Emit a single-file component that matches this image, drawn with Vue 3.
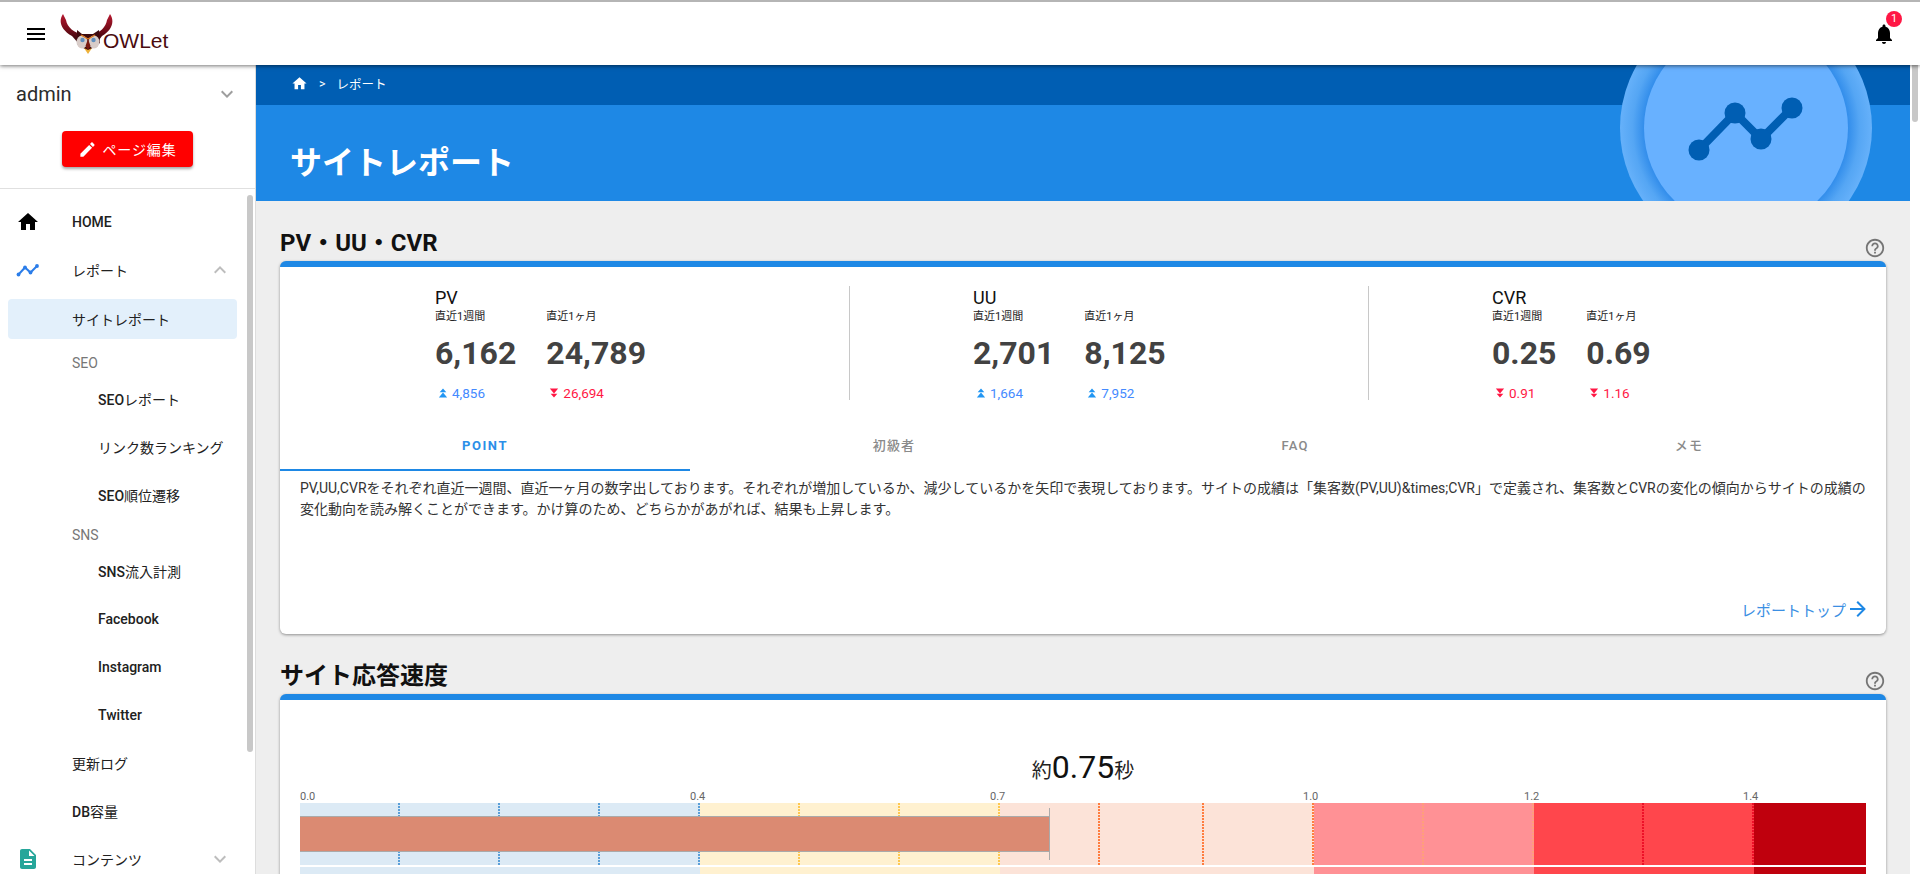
<script setup>
const sideItems = [
  { label: 'HOME', icon: 'home' },
  { label: 'レポート', icon: 'chart', chevron: 'up' },
  { label: 'サイトレポート', active: true },
  { label: 'SEO', group: true },
  { label: 'SEOレポート', nested: true },
  { label: 'リンク数ランキング', nested: true },
  { label: 'SEO順位遷移', nested: true },
  { label: 'SNS', group: true },
  { label: 'SNS流入計測', nested: true },
  { label: 'Facebook', nested: true },
  { label: 'Instagram', nested: true },
  { label: 'Twitter', nested: true },
  { label: '更新ログ' },
  { label: 'DB容量' },
  { label: 'コンテンツ', icon: 'doc', chevron: 'down' },
]

// 英字だけ medium、和文は regular で出す
function labelParts(text) {
  return text.split(/([A-Za-z]+)/).filter(Boolean)
}

const stats = [
  { name: 'PV', cols: [
    { label: '直近1週間', value: '6,162', delta: '4,856', up: true },
    { label: '直近1ヶ月', value: '24,789', delta: '26,694', up: false },
  ] },
  { name: 'UU', cols: [
    { label: '直近1週間', value: '2,701', delta: '1,664', up: true },
    { label: '直近1ヶ月', value: '8,125', delta: '7,952', up: true },
  ] },
  { name: 'CVR', cols: [
    { label: '直近1週間', value: '0.25', delta: '0.91', up: false },
    { label: '直近1ヶ月', value: '0.69', delta: '1.16', up: false },
  ] },
]

const tabs = ['POINT', '初級者', 'FAQ', 'メモ']

// 応答速度メーターの区間 (目盛りごとのpx幅)
const segments = [
  { cls: 'seg-blue', cells: [100, 100, 100, 100] },
  { cls: 'seg-yellow', cells: [100, 100, 100] },
  { cls: 'seg-peach', cells: [100, 104, 110] },
  { cls: 'seg-pink', cells: [110, 110] },
  { cls: 'seg-red', cells: [110, 110] },
  { cls: 'seg-dark', cells: [112], last: true },
]

const scale = [
  { text: '0.0', width: 390 },
  { text: '0.4', width: 300 },
  { text: '0.7', width: 313 },
  { text: '1.0', width: 221 },
  { text: '1.2', width: 219 },
  { text: '1.4', width: 100 },
]

function segWidth(seg) {
  return seg.cells.reduce((a, b) => a + b, 0)
}
</script>

<template>
  <div class="app">
    <header class="topbar">
      <svg class="menu-icon" viewBox="0 0 24 24"><path d="M3 18h18v-2H3v2zm0-5h18v-2H3v2zm0-7v2h18V6H3z" /></svg>
      <div class="logo">
        <svg class="owl" viewBox="0 0 54 42">
          <defs>
            <linearGradient id="wing" x1="0" y1="0" x2="0" y2="1">
              <stop offset="0" stop-color="#b81830" />
              <stop offset="0.55" stop-color="#6e0c18" />
              <stop offset="1" stop-color="#240406" />
            </linearGradient>
          </defs>
          <path d="M3 1C-2 8 1 17 12 23L19 31L24 22C14 20 7 14 6 7Z" fill="url(#wing)" />
          <path d="M50 1C55 8 52 17 42 23L36 31L31 22C40 20 46 14 47 7Z" fill="url(#wing)" />
          <path d="M17 17L22 21H33L39 17L40 30L28 38L17 31Z" fill="#3e0a0e" />
          <ellipse cx="22" cy="29" rx="5.5" ry="6.5" fill="#d8ccc8" />
          <ellipse cx="34" cy="29" rx="5.5" ry="6.5" fill="#d8ccc8" />
          <circle cx="22.5" cy="27" r="2.2" fill="#5f8fbe" />
          <circle cx="33.5" cy="27" r="2.2" fill="#5f8fbe" />
          <path d="M21 22L28 26L35 22" fill="none" stroke="#d9761e" stroke-width="1.4" />
          <path d="M28 26L30.5 33L28 37L25.5 33Z" fill="#7a1a10" />
          <path d="M24 35L28 41L32 35L28 37Z" fill="#eeb23a" />
        </svg>
        <span class="logo-text">OWLet</span>
      </div>
      <div class="bell">
        <svg viewBox="0 0 24 24"><path d="M12 22c1.1 0 2-.9 2-2h-4c0 1.1.89 2 2 2zm6-6v-5c0-3.07-1.64-5.64-4.5-6.32V4c0-.83-.67-1.5-1.5-1.5s-1.5.67-1.5 1.5v.68C7.63 5.36 6 7.92 6 11v5l-2 2v1h16v-1l-2-2z" /></svg>
        <span class="badge">1</span>
      </div>
    </header>

    <div class="body">
      <aside class="sidebar">
        <div class="user-row">
          <span>admin</span>
          <svg class="chev" viewBox="0 0 24 24"><path d="M7.41 8.58L12 13.17l4.59-4.59L18 10l-6 6-6-6 1.41-1.42z" /></svg>
        </div>
        <div class="edit-wrap">
          <button class="edit-btn">
            <svg viewBox="0 0 24 24"><path d="M3 17.25V21h3.75L17.81 9.94l-3.75-3.75L3 17.25zM20.71 7.04c.39-.39.39-1.02 0-1.41l-2.34-2.34c-.39-.39-1.02-.39-1.41 0l-1.83 1.83 3.75 3.75 1.83-1.83z" /></svg>
            ページ編集
          </button>
        </div>
        <nav class="nav">
          <div
            v-for="item in sideItems"
            :key="item.label"
            class="nav-row"
            :class="{ active: item.active, group: item.group, nested: item.nested }"
          >
            <svg v-if="item.icon === 'home'" class="nav-icon" viewBox="0 0 24 24"><path d="M10 20v-6h4v6h5v-8h3L12 3 2 12h3v8z" /></svg>
            <svg v-else-if="item.icon === 'chart'" class="nav-icon chart" viewBox="0 0 24 24">
              <path d="M2.5 16.5L9 9.5L14.5 14.5L21 8" fill="none" stroke="#2b7de9" stroke-width="2" />
              <circle cx="2.5" cy="16.5" r="1.9" /><circle cx="9" cy="9.5" r="1.9" /><circle cx="14.5" cy="14.5" r="1.9" /><circle cx="21" cy="8" r="1.9" />
            </svg>
            <svg v-else-if="item.icon === 'doc'" class="nav-icon doc" viewBox="0 0 24 24"><path d="M14 2H6c-1.1 0-1.99.9-1.99 2L4 20c0 1.1.89 2 1.99 2H18c1.1 0 2-.9 2-2V8l-6-6zm2 16H8v-2h8v2zm0-4H8v-2h8v2zm-3-5V3.5L18.5 9H13z" /></svg>
            <span class="nav-label">
              <span v-for="part in labelParts(item.label)" :key="part" :class="{ latin: /[A-Za-z]/.test(part) }">{{ part }}</span>
            </span>
            <svg v-if="item.chevron === 'up'" class="chev nav-chev" viewBox="0 0 24 24"><path d="M7.41 15.41L12 10.83l4.59 4.58L18 14l-6-6-6 6z" /></svg>
            <svg v-if="item.chevron === 'down'" class="chev nav-chev" viewBox="0 0 24 24"><path d="M7.41 8.58L12 13.17l4.59-4.59L18 10l-6 6-6-6 1.41-1.42z" /></svg>
          </div>
        </nav>
        <div class="side-thumb"></div>
      </aside>

      <main class="main">
        <section class="banner">
          <div class="crumbs">
            <svg viewBox="0 0 24 24"><path d="M10 20v-6h4v6h5v-8h3L12 3 2 12h3v8z" /></svg>
            <span class="sep">&gt;</span>
            <span>レポート</span>
          </div>
          <h1>サイトレポート</h1>
          <div class="disc">
            <div class="disc-inner">
              <svg viewBox="0 0 204 204">
                <path d="M55 124L91 87L117 113L148 82" fill="none" stroke="#005eb3" stroke-width="8" />
                <circle cx="55" cy="124" r="10.5" fill="#005eb3" />
                <circle cx="91" cy="87" r="10.5" fill="#005eb3" />
                <circle cx="117" cy="113" r="10.5" fill="#005eb3" />
                <circle cx="148" cy="82" r="10.5" fill="#005eb3" />
              </svg>
            </div>
          </div>
        </section>

        <section class="section">
          <div class="section-head">
            <h2>PV・UU・CVR</h2>
            <svg class="help" viewBox="0 0 24 24"><path d="M11 18h2v-2h-2v2zm1-16C6.48 2 2 6.48 2 12s4.48 10 10 10 10-4.48 10-10S17.52 2 12 2zm0 18c-4.41 0-8-3.59-8-8s3.59-8 8-8 8 3.59 8 8-3.59 8-8 8zm0-14c-2.21 0-4 1.79-4 4h2c0-1.1.9-2 2-2s2 .9 2 2c0 2-3 1.75-3 5h2c0-2.25 3-2.5 3-5 0-2.21-1.79-4-4-4z" /></svg>
          </div>
          <div class="card card-stats">
            <div class="stats">
              <div v-for="stat in stats" :key="stat.name" class="stat" :class="'stat-' + stat.name">
                <div class="stat-name">{{ stat.name }}</div>
                <div class="stat-cols">
                  <div v-for="col in stat.cols" :key="col.label">
                    <div class="stat-label">{{ col.label }}</div>
                    <div class="stat-value">{{ col.value }}</div>
                    <div class="stat-delta" :class="col.up ? 'up' : 'down'">
                      <svg viewBox="0 0 12 12">
                        <path v-if="col.up" d="M6 0.5L10 5H2ZM6 5.5L11 11.5H1Z" />
                        <path v-else d="M1 0.5H11L6 6.5ZM2 7H10L6 11.5Z" />
                      </svg>
                      {{ col.delta }}
                    </div>
                  </div>
                </div>
              </div>
            </div>
            <div class="tabs">
              <div v-for="(tab, i) in tabs" :key="tab" class="tab" :class="{ on: i === 0 }">{{ tab }}</div>
            </div>
            <p class="desc">PV,UU,CVRをそれぞれ直近一週間、直近一ヶ月の数字出しております。それぞれが増加しているか、減少しているかを矢印で表現しております。サイトの成績は「集客数(PV,UU)&amp;times;CVR」で定義され、集客数とCVRの変化の傾向からサイトの成績の変化動向を読み解くことができます。かけ算のため、どちらかがあがれば、結果も上昇します。</p>
            <a class="more">
              レポートトップ
              <svg viewBox="0 0 24 24"><path d="M4 11v2h12l-5.5 5.5 1.42 1.42L19.84 12l-7.92-7.92L10.5 5.5 16 11H4z" /></svg>
            </a>
          </div>
        </section>

        <section class="section section-speed">
          <div class="section-head">
            <h2>サイト応答速度</h2>
            <svg class="help" viewBox="0 0 24 24"><path d="M11 18h2v-2h-2v2zm1-16C6.48 2 2 6.48 2 12s4.48 10 10 10 10-4.48 10-10S17.52 2 12 2zm0 18c-4.41 0-8-3.59-8-8s3.59-8 8-8 8 3.59 8 8-3.59 8-8 8zm0-14c-2.21 0-4 1.79-4 4h2c0-1.1.9-2 2-2s2 .9 2 2c0 2-3 1.75-3 5h2c0-2.25 3-2.5 3-5 0-2.21-1.79-4-4-4z" /></svg>
          </div>
          <div class="card card-speed">
            <div class="speed-value">約<b>0.75</b>秒</div>
            <div class="scale">
              <span v-for="s in scale" :key="s.text" :style="{ width: s.width + 'px' }">{{ s.text }}</span>
            </div>
            <div class="meter">
              <div v-for="seg in segments" :key="seg.cls" class="seg" :class="[seg.cls, { last: seg.last }]">
                <i v-for="(w, n) in seg.cells" :key="n" :style="{ width: w + 'px' }"></i>
              </div>
              <div class="meter-bar"></div>
            </div>
            <div class="meter meter-second">
              <div v-for="seg in segments" :key="seg.cls" class="seg" :class="seg.cls" :style="{ width: segWidth(seg) + 'px' }"></div>
            </div>
          </div>
        </section>
        <div class="page-thumb"></div>
      </main>
    </div>
  </div>
</template>

<style>
html, body { margin: 0; height: 874px; overflow: hidden; }
</style>

<style scoped>
.app {
  width: 1920px;
  height: 874px;
  overflow: hidden;
  display: flex;
  flex-direction: column;
  font-family: Roboto, "Noto Sans CJK JP", sans-serif;
  color: #212121;
  background: #eee;
}

.topbar {
  height: 65px;
  box-sizing: border-box;
  flex: none;
  border-top: 2px solid #b5b5b5;
  background: #fff;
  box-shadow: 0 1px 4px rgba(0, 0, 0, .55);
  display: flex;
  align-items: center;
  padding: 0 24px;
  position: relative;
  z-index: 5;
}
.menu-icon { width: 24px; height: 24px; }
.logo { display: flex; margin-left: 12px; position: relative; height: 42px; align-items: flex-start; }
.owl { width: 54px; height: 42px; }
.logo-text {
  font-family: "Liberation Sans", sans-serif;
  font-size: 21px;
  color: #4a0b10;
  margin: 17px 0 0 -11px;
  line-height: 22px;
}
.bell { margin-left: auto; width: 24px; height: 24px; position: relative; top: 0; }
.bell svg { width: 24px; height: 24px; display: block; }
.badge {
  position: absolute;
  top: -11px;
  right: -6px;
  width: 16px;
  height: 16px;
  border-radius: 50%;
  background: #ff1744;
  color: #fff;
  font-size: 11px;
  line-height: 16px;
  text-align: center;
}

.body { flex: 1; display: flex; min-height: 0; }

.sidebar {
  width: 256px;
  box-sizing: border-box;
  flex: none;
  background: #fff;
  border-right: 1px solid #ddd;
  position: relative;
  overflow: hidden;
}
.user-row {
  height: 58px;
  padding: 0 16px;
  display: flex;
  align-items: center;
  justify-content: space-between;
  font-size: 20px;
  box-sizing: border-box;
  color: #2c2c2c;
}
.chev { width: 24px; height: 24px; fill: #9e9e9e; }
.edit-wrap {
  height: 66px;
  display: flex;
  justify-content: center;
  padding: 8px 0 0;
  box-sizing: border-box;
  border-bottom: 1px solid #e0e0e0;
}
.edit-btn {
  width: 131px;
  height: 36px;
  border: 0;
  border-radius: 4px;
  background: #ff0000;
  color: #fff;
  font: 14px Roboto, "Noto Sans CJK JP", sans-serif;
  letter-spacing: .9px;
  display: flex;
  align-items: center;
  justify-content: center;
  gap: 5px;
  box-shadow: 0 2px 3px rgba(0, 0, 0, .35);
}
.edit-btn svg { width: 19px; height: 19px; fill: #fff; }

.nav { padding-top: 9px; }
.nav-row {
  height: 48px;
  margin: 0 16px 0 8px;
  padding-left: 64px;
  display: flex;
  align-items: center;
  position: relative;
  font-size: 14px;
  color: #212121;
}
.nav-label .latin { font-weight: 500; }
.nav-row.active { height: 40px; margin: 5px 0 3px 8px; background: #e3f0fb; border-radius: 4px; width: 229px; box-sizing: border-box; }
.nav-row.group { height: 24px; color: #777; margin-top: 4px; }
.nav-row.group .latin { font-weight: 400; }
.nav-row.active + .group { margin-top: 12px; }
.nav-row.nested { padding-left: 90px; }
.nav-icon {
  position: absolute;
  left: 8px;
  top: 50%;
  margin-top: -12px;
  width: 24px;
  height: 24px;
}
.nav-icon.chart { fill: #2b7de9; }
.nav-icon.doc { fill: #26a69a; }
.nav-chev { position: absolute; right: 7px; top: 50%; margin-top: -12px; fill: #bdbdbd; }
.side-thumb {
  position: absolute;
  top: 130px;
  right: 2px;
  width: 6px;
  height: 557px;
  border-radius: 3px;
  background: #c8c8c8;
}

.main { flex: 1; min-width: 0; position: relative; overflow: hidden; padding-right: 10px; background: #eee; }
.main::after {
  content: '';
  position: absolute;
  top: 0;
  bottom: 0;
  right: 0;
  width: 10px;
  background: #fff;
}
.page-thumb {
  position: absolute;
  z-index: 2;
  top: 0;
  right: 2px;
  width: 6px;
  height: 57px;
  border-radius: 0 0 3px 3px;
  background: #c8c8c8;
}

.banner {
  height: 136px;
  background: linear-gradient(#005eb3 40px, #1e88e5 40px);
  position: relative;
  overflow: hidden;
  color: #fff;
  padding-left: 35px;
}
.crumbs { height: 37px; display: flex; align-items: center; font-size: 12.5px; }
.crumbs svg { width: 17px; height: 17px; fill: #fff; }
.crumbs .sep { margin: 0 11px 0 11px; }
.banner h1 { margin: 39px 0 0 -1px; font-size: 32px; line-height: 44px; font-weight: 700; }
.disc {
  position: absolute;
  left: 1364px;
  top: -63px;
  width: 252px;
  height: 252px;
  border-radius: 50%;
  background: radial-gradient(closest-side, #2f8bea 80%, #55a6f4 90%, #66b1fa 100%);
  display: flex;
  align-items: center;
  justify-content: center;
}
.disc-inner { width: 204px; height: 204px; border-radius: 50%; background: #68b1ff; }
.disc svg { width: 204px; height: 204px; display: block; }

.section { padding: 0 24px; }
.section-head { height: 60px; display: flex; justify-content: space-between; align-items: flex-end; box-sizing: border-box; }
.section-head h2 { margin: 0 0 3px; font-size: 24px; line-height: 30px; font-weight: 700; color: #111; }
.help { width: 22px; height: 22px; fill: #757575; margin-bottom: 2px; }

.card {
  background: #fff;
  border-top: 6px solid #1e88e5;
  border-radius: 6px;
  box-shadow: 0 1px 3px rgba(0, 0, 0, .4);
}
.card-stats { height: 373px; box-sizing: border-box; position: relative; }
.stats { display: grid; grid-template-columns: 569px 519px 518px; padding-top: 19px; height: 114px; }
.stat { height: 114px; border-left: 1px solid #c8c8c8; }
.stat-PV { border-left: 0; padding-left: 155px; }
.stat-UU { padding-left: 123px; }
.stat-CVR { padding-left: 123px; }
.stat-name { font-size: 18px; line-height: 23px; color: #111; }
.stat-cols { display: flex; gap: 30px; }
.stat-label { font-size: 11px; line-height: 15px; color: #222; }
.stat-value { font-size: 32px; font-weight: 700; line-height: 40px; margin-top: 9px; color: #424242; }
.stat-delta { display: flex; align-items: center; gap: 4px; font-size: 13.5px; line-height: 18px; margin-top: 11px; padding-left: 3px; }
.stat-delta svg { width: 10px; height: 12px; }
.stat-delta.up { color: #448aff; }
.stat-delta.up svg { fill: #2196f3; }
.stat-delta.down { color: #ff1744; }
.stat-delta.down svg { fill: #ff1744; }

.tabs {
  display: grid;
  grid-template-columns: 410px 408px 394px 394px;
  margin-top: 22px;
  height: 48px;
}
.tab {
  font-size: 13px;
  font-weight: 500;
  letter-spacing: 1.2px;
  color: #8a8a8a;
  text-align: center;
  line-height: 47px;
  box-sizing: border-box;
}
.tab.on { color: #2b8fe8; font-weight: 700; border-bottom: 2px solid #1e88e5; letter-spacing: 1.6px; }

.desc { margin: 8px 20px 0; font-size: 14px; line-height: 21px; color: #333; }
.more {
  position: absolute;
  right: 16px;
  bottom: 13px;
  display: flex;
  align-items: center;
  font-size: 15px;
  color: #3b8fe3;
}
.more svg { width: 24px; height: 24px; fill: #1e88e5; }

.card-speed { padding: 0 20px; height: 300px; }
.speed-value { padding-top: 47px; text-align: center; font-size: 20px; line-height: 40px; color: #222; }
.speed-value b { font-size: 32px; font-weight: 400; color: #111; }
.scale { display: flex; font-size: 11px; line-height: 12px; color: #666; }
.meter { display: flex; width: 1566px; height: 62px; position: relative; }
.meter-second { margin-top: 2px; }
.seg { display: flex; }
/* 目盛りは2px幅の点線 (2px描いて1px空ける) */
.seg i {
  flex: none;
  background: repeating-linear-gradient(currentColor 0 2px, transparent 2px 3px) right top / 2px 100% no-repeat;
}
.seg.last i { background: none; }
.seg-blue { background: #dceaf5; color: #5a9fd8; }
.seg-yellow { background: #fff1d0; color: #ffc84f; }
.seg-peach { background: #fce3d8; color: #ff7d3f; }
.seg-pink { background: #ff9195; color: #ff9f7a; }
.seg-red { background: #ff464c; color: #ee1028; }
.seg-dark { background: #bf000d; }
.meter-bar {
  position: absolute;
  left: 0;
  top: 13px;
  width: 750px;
  height: 36px;
  box-sizing: border-box;
  background: #db8a72;
  border-top: 1px solid #aaa;
  border-bottom: 1px solid #aaa;
}
.meter-bar::after {
  content: '';
  position: absolute;
  right: 0;
  top: -9px;
  bottom: -9px;
  width: 1px;
  background: #aaa;
}
</style>
